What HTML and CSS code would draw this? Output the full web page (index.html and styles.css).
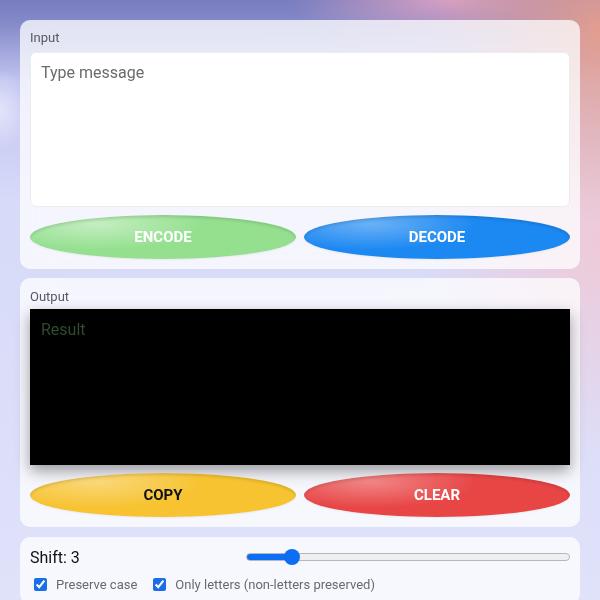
FILE: index.html
```html
<!DOCTYPE html>
<html lang="en">
<head>
<meta charset="utf-8">
<title>Caesar Cipher</title>
<link rel="stylesheet" href="styles.css">
</head>
<body>
<main class="app">
  <section class="card">
    <div class="label">Input</div>
    <textarea class="input" placeholder="Type message"></textarea>
    <div class="actions">
      <button class="btn btn-encode">ENCODE</button>
      <button class="btn btn-decode">DECODE</button>
    </div>
  </section>
  <section class="card">
    <div class="label label-out">Output</div>
    <div class="output"><span class="placeholder">Result</span></div>
    <div class="actions">
      <button class="btn btn-copy">COPY</button>
      <button class="btn btn-clear">CLEAR</button>
    </div>
  </section>
  <section class="card card-settings">
    <div class="shift-row">
      <span class="shift-label">Shift: 3</span>
      <input class="slider" type="range" min="0" max="25" value="3" style="--fill: 14%">
    </div>
    <div class="options">
      <label class="option"><input type="checkbox" checked><span>Preserve case</span></label>
      <label class="option"><input type="checkbox" checked><span>Only letters (non-letters preserved)</span></label>
    </div>
  </section>
</main>
</body>
</html>
```

FILE: styles.css
```css
html, body {
  margin: 0;
  height: 100%;
}
body {
  font-family: Roboto, "Noto Sans", Arial, sans-serif;
  background:
    radial-gradient(ellipse 220px 260px at 100% 5%, rgba(232,158,140,0.95), rgba(232,158,140,0) 75%),
    radial-gradient(ellipse 260px 320px at 100% 40%, rgba(246,196,206,0.75), rgba(246,196,206,0) 70%),
    radial-gradient(ellipse 200px 60px at 75% 0%, rgba(215,160,195,1), rgba(215,160,195,0) 80%),
    radial-gradient(ellipse 40px 50px at 0% 110px, rgba(240,240,255,0.7), rgba(240,240,255,0) 80%),
    linear-gradient(180deg, #777dbe 0px, #8489c8 22px, #c0c3ee 80px, #d7daf8 200px, #e0e2fa 100%);
  overflow: hidden;
}
.app {
  padding: 20px;
  display: flex;
  flex-direction: column;
  gap: 9px;
}
.card {
  background: rgba(255,255,255,0.74);
  backdrop-filter: blur(16px);
  border-radius: 10px;
  padding: 10px;
  display: flex;
  flex-direction: column;
}
.label {
  font-size: 13px;
  line-height: 16px;
  color: #555a60;
  margin-bottom: 6px;
}
.label-out {
  margin-top: 1px;
  margin-bottom: 4px;
}
.input {
  box-sizing: border-box;
  height: 155px;
  width: 100%;
  resize: none;
  border: 1px solid #ebebf0;
  border-radius: 6px;
  background: #fff;
  padding: 10px;
  font-family: Roboto, "Noto Sans", Arial, sans-serif;
  font-size: 16px;
  line-height: 19px;
  outline: none;
}
.input::placeholder {
  color: #6b6b6b;
}
.output {
  box-sizing: border-box;
  height: 156px;
  background: #000;
  padding: 11px 11px 10px;
  font-size: 16px;
  line-height: 19px;
  box-shadow: 0 6px 14px rgba(0,0,0,0.38);
}
.placeholder {
  color: #2f4a31;
}
.actions {
  display: grid;
  grid-template-columns: 1fr 1fr;
  gap: 8px;
  margin-top: 8px;
}
.btn {
  height: 44px;
  border: none;
  border-radius: 50%;
  font-family: Roboto, "Noto Sans", Arial, sans-serif;
  font-weight: 700;
  font-size: 15px;
  color: #fff;
  padding: 0 0 1px;
  box-shadow: inset 0 2px 3px rgba(0,0,0,0.12), 0 1px 2px rgba(0,0,0,0.06);
}
.btn-encode {
  background:
    radial-gradient(ellipse 40% 60% at 25% 20%, rgba(255,255,255,0.45), rgba(255,255,255,0) 100%),
    #94e08f;
}
.btn-decode {
  background:
    radial-gradient(ellipse 40% 60% at 25% 20%, rgba(255,255,255,0.35), rgba(255,255,255,0) 100%),
    #1c88f2;
}
.btn-copy {
  color: #111;
  background:
    radial-gradient(ellipse 40% 60% at 25% 20%, rgba(255,255,255,0.35), rgba(255,255,255,0) 100%),
    #f7c331;
}
.btn-clear {
  background:
    radial-gradient(ellipse 40% 60% at 25% 20%, rgba(255,255,255,0.35), rgba(255,255,255,0) 100%),
    #e84545;
}
.card-settings {
  margin-top: 1px;
  padding-bottom: 12px;
}
.shift-row {
  display: flex;
  align-items: center;
  justify-content: space-between;
  height: 20px;
}
.shift-label {
  font-size: 16px;
  color: #111;
}
.slider {
  -webkit-appearance: none;
  appearance: none;
  width: 324px;
  height: 16px;
  margin: 0;
  background: transparent;
}
.slider::-webkit-slider-runnable-track {
  box-sizing: border-box;
  height: 8px;
  border-radius: 4px;
  border: 1px solid #b8b8bc;
  background: linear-gradient(90deg, #0b6ef3 0, #0b6ef3 var(--fill), #efeff1 var(--fill));
}
.slider::-webkit-slider-thumb {
  -webkit-appearance: none;
  appearance: none;
  width: 16px;
  height: 16px;
  margin-top: -5px;
  border-radius: 50%;
  background: #0b6ef3;
  border: none;
}
.options {
  display: flex;
  gap: 12px;
  margin-top: 10px;
}
.option {
  display: inline-flex;
  align-items: center;
  font-size: 13px;
  color: #666a70;
}
.option input {
  margin: 0 9px 0 4px;
  width: 13px;
  height: 13px;
  accent-color: #1a6fe6;
}
```
